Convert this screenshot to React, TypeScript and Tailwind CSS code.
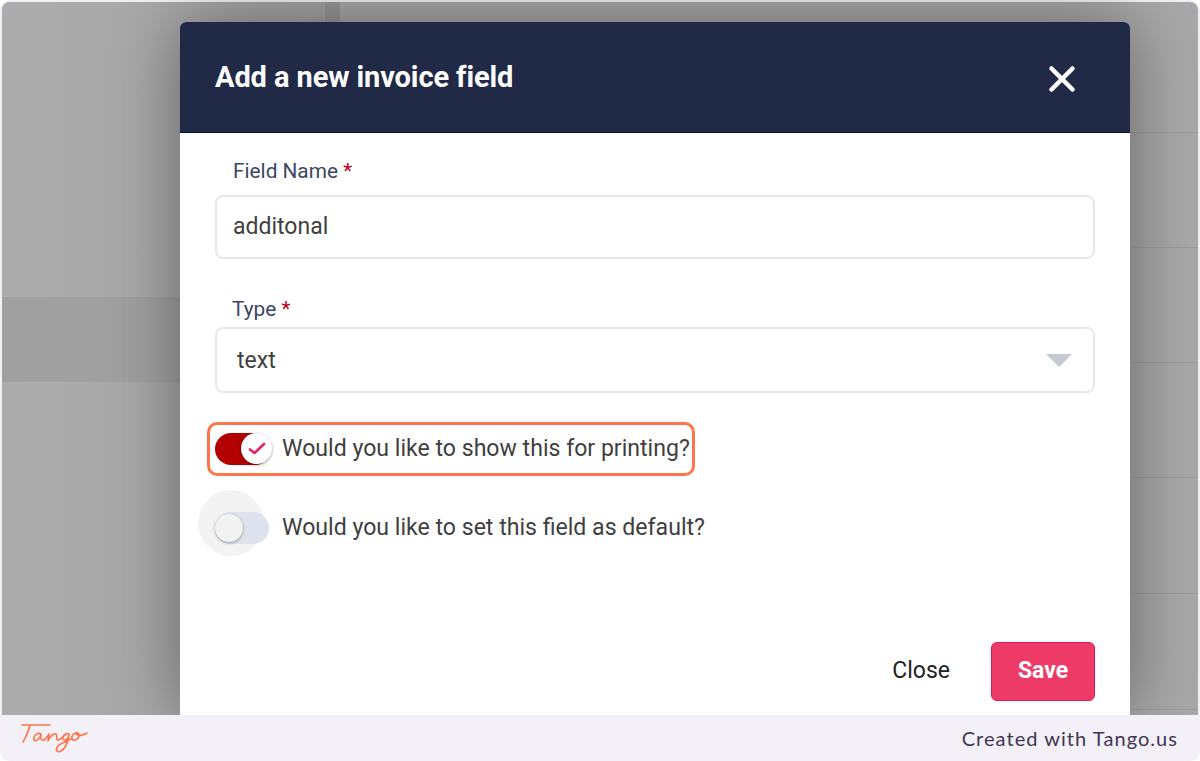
import { X } from 'lucide-react';

const rowLines = ['h-[131px]', 'h-[115px]', 'h-[115px]', 'h-[115px]', 'h-[116px]', 'h-[116px]'];

function Toggle({ on }: { on: boolean }) {
  if (on) {
    return (
      <div className="relative h-[32px] w-[56px] shrink-0 rounded-full bg-[#b30000]">
        <div className="absolute left-[26px] top-0 flex h-[31px] w-[31px] items-center justify-center rounded-full bg-white shadow-[0_1px_3px_rgba(0,0,0,0.4)]">
          <svg width="18" height="13" viewBox="0 0 18 13" fill="none">
            <path d="M2 7.5 L6.5 11 L16 2" stroke="#e91e63" strokeWidth="2.6" strokeLinecap="round" strokeLinejoin="round" />
          </svg>
        </div>
      </div>
    );
  }
  return (
    <div className="relative h-[32px] w-[54px] shrink-0 rounded-full bg-[#dde2ec]">
      <div className="absolute left-0 top-[2px] h-[28px] w-[28px] rounded-full bg-[#f2f2f2] shadow-[0_1px_3px_rgba(0,0,0,0.35)]" />
      <div className="absolute -left-[17px] -top-[22px] -z-10 h-[66px] w-[66px] rounded-full bg-[#f3f3f3]" />
    </div>
  );
}

function Field({ label, className, children }: { label: string; className: string; children: React.ReactNode }) {
  return (
    <div>
      <div className={`text-[20.8px] leading-[24px] text-[#3c4665] ${className}`}>
        {label} <span className="text-[#c00020]">*</span>
      </div>
      {children}
    </div>
  );
}

export default function App() {
  return (
    <div className="relative flex h-[761px] w-[1200px] flex-col overflow-hidden rounded-[10px] bg-[#f3f1f7] font-['Roboto',sans-serif]">
      <div className="ml-[2px] mr-[2px] mt-[2px] flex h-[713px] overflow-hidden rounded-t-[8px] bg-[#a8a8a8]">
        <div className="w-[323px] shrink-0 bg-gradient-to-r from-[#acacac] to-[#a4a4a4]">
          <div className="mt-[295px] h-[85px] bg-[#a0a0a0]" />
        </div>
        <div className="w-[15px] shrink-0 bg-[#989898]" />
        <div className="flex-1">
          {rowLines.map((h, i) => (
            <div key={i} className={`${h} border-b border-[#9c9c9c]`} />
          ))}
        </div>
      </div>

      <div className="absolute left-[180px] top-[22px] isolate h-[693px] w-[950px] rounded-t-[6px] bg-white shadow-[0_0_70px_rgba(0,0,0,0.4)]">
        <div className="flex h-[111px] items-center justify-between rounded-t-[6px] border-b border-[#10162a] bg-[#202a46] pl-[35px] pr-[47px]">
          <h2 className="text-[29px] font-bold leading-[36px] tracking-[-0.1px] text-white">Add a new invoice field</h2>
          <X className="mt-[4px] text-white" size={42} strokeWidth={2.6} />
        </div>

        <div className="px-[35px]">
          <Field label="Field Name" className="pb-[12px] pl-[18px] pt-[26px]">
            <div className="flex h-[64px] items-center rounded-[8px] border-2 border-[#e8e8ea] pl-[16px] text-[23px] text-[#3f3f3f]">
              additonal
            </div>
          </Field>

          <div className="mt-[38px]">
            <Field label="Type" className="pb-[6px] pl-[17px]">
              <div className="flex h-[66px] items-center justify-between rounded-[8px] border-2 border-[#e8e8ea] pl-[20px] pr-[21px] text-[23px] text-[#3f3f3f]">
                <span className="pt-[2px]">text</span>
                <div className="h-0 w-0 border-x-[13px] border-t-[13px] border-x-transparent border-t-[#c4c9d2]" />
              </div>
            </Field>
          </div>

          <div className="relative mt-[40px] flex items-center gap-[11px]">
            <div className="absolute -left-[8px] -top-[11px] h-[54px] w-[488px] rounded-[10px] border-[3px] border-[#ff7448]" />
            <Toggle on />
            <span className="text-[23.1px] leading-[32px] text-[#3f3f3f]">Would you like to show this for printing?</span>
          </div>

          <div className="mt-[47px] flex items-center gap-[13px]">
            <Toggle on={false} />
            <span className="text-[23.1px] leading-[32px] text-[#3f3f3f]">Would you like to set this field as default?</span>
          </div>

          <div className="mt-[98px] flex items-center justify-end gap-[41px]">
            <span className="text-[23px] text-[#222222]">Close</span>
            <div className="flex h-[59px] w-[104px] items-center justify-center rounded-[6px] border border-[#e0194f] bg-[#ee3a66] text-[23px] font-bold text-white">
              Save
            </div>
          </div>
        </div>
      </div>

      <div className="relative z-10 flex h-[46px] items-center justify-between rounded-b-[10px] bg-[#f3f1f7] pl-[20px] pr-[22px]">
        <svg width="70" height="34" viewBox="0 0 70 34" fill="none" stroke="#ff7448" strokeWidth="1.6" strokeLinecap="round" strokeLinejoin="round">
          <path d="M2 4 H30" />
          <path d="M10 4 C9 10 6 15 3 21" />
          <path d="M21 13 C17 11 13 15 14 19 C15 21 19 19 21 14 C20 17 21 20 24 19 C27 17 28 14 29 13 C29 15 28 18 28 20 C30 16 33 12 36 13 C38 14 35 19 38 19 C41 19 43 15 46 13" />
          <path d="M49 13 C45 11 42 16 43 18 C45 21 49 17 49 13 C49 19 46 27 41 30 C37 32 35 29 38 25 C41 22 47 20 51 18" />
          <path d="M58 12 C54 11 51 15 52 18 C54 21 59 18 59 14 C59 12 57 12 56 13 C58 15 63 15 67 12" />
        </svg>
        <span className="font-['Lato',sans-serif] text-[20px] tracking-[1.05px] text-[#403555]">Created with Tango.us</span>
      </div>
    </div>
  );
}
